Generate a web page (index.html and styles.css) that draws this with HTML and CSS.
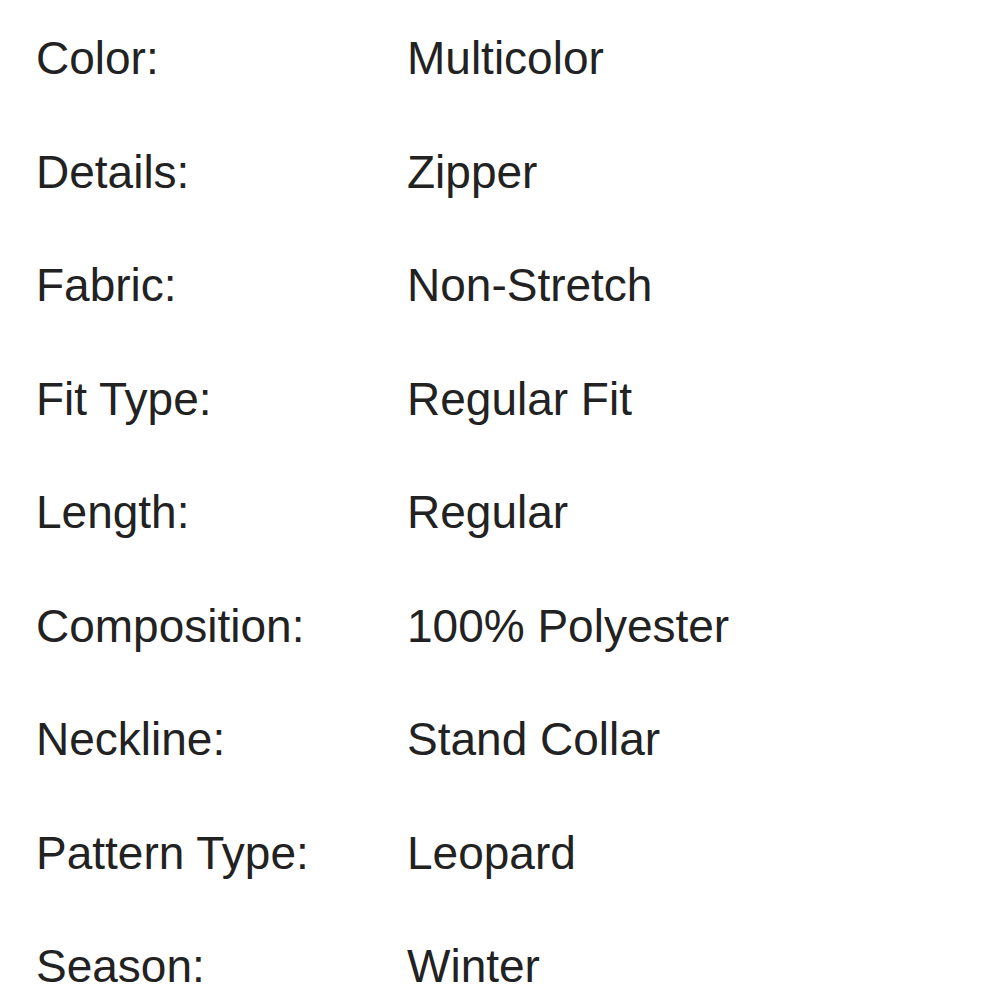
FILE: index.html
```html
<!DOCTYPE html>
<html>
<head>
<meta charset="utf-8">
<link rel="stylesheet" href="styles.css">
</head>
<body>
<dl class="specs">
  <div class="row"><dt>Color:</dt><dd>Multicolor</dd></div>
  <div class="row"><dt>Details:</dt><dd>Zipper</dd></div>
  <div class="row"><dt>Fabric:</dt><dd>Non-Stretch</dd></div>
  <div class="row"><dt>Fit Type:</dt><dd>Regular Fit</dd></div>
  <div class="row"><dt>Length:</dt><dd>Regular</dd></div>
  <div class="row"><dt>Composition:</dt><dd>100% Polyester</dd></div>
  <div class="row"><dt>Neckline:</dt><dd>Stand Collar</dd></div>
  <div class="row"><dt>Pattern Type:</dt><dd>Leopard</dd></div>
  <div class="row"><dt>Season:</dt><dd>Winter</dd></div>
</dl>
</body>
</html>
```
FILE: styles.css
```css
html, body {
  margin: 0;
  padding: 0;
  background: #ffffff;
}
body {
  font-family: "Liberation Sans", Arial, Helvetica, sans-serif;
  color: #222222;
  overflow: hidden;
}
.specs {
  margin: 0;
  padding: 2px 0 0 36px;
}
.row {
  display: grid;
  grid-template-columns: 371px 1fr;
  height: 113.5px;
  font-size: 46px;
  line-height: 113.5px;
}
.row dt, .row dd {
  margin: 0;
  white-space: nowrap;
}
```
